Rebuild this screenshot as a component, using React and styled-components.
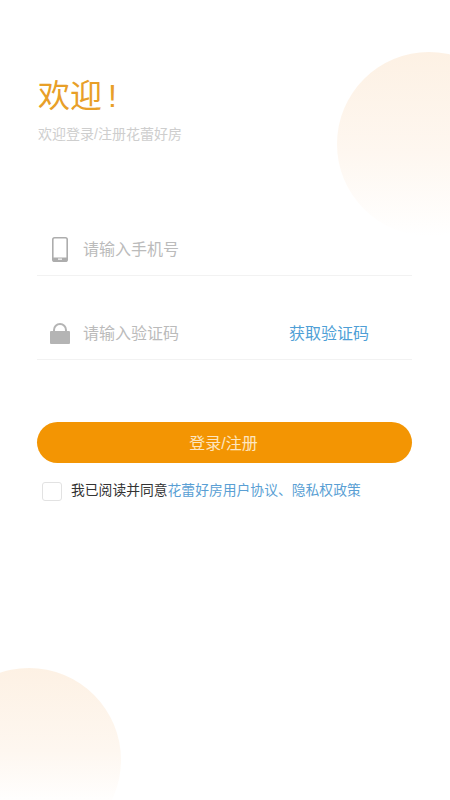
import React from "react";
import styled, { createGlobalStyle } from "styled-components";

const GlobalStyle = createGlobalStyle`
  html, body {
    margin: 0;
    padding: 0;
    background: #fff;
  }
  * {
    box-sizing: border-box;
  }
`;

const App = () => {
  return (
    <>
      <GlobalStyle />
      <Page>
        <TopCircle />
        <BottomCircle />
        <Content>
          <Title>
            欢迎<Bang>!</Bang>
          </Title>
          <Subtitle>欢迎登录/注册花蕾好房</Subtitle>
          <Form>
            <Field>
              <IconBox>
                <svg width="16" height="25" viewBox="0 0 16 25">
                  <rect x="0.8" y="0.8" width="14.4" height="23.4" rx="1.8" fill="none" stroke="#adadad" strokeWidth="1.6" />
                  <path d="M0.8 20.5h14.4v2a1.8 1.8 0 0 1-1.8 1.8H2.6a1.8 1.8 0 0 1-1.8-1.8z" fill="#adadad" />
                  <rect x="6" y="21.4" width="4" height="1.6" fill="#e8e8e8" />
                </svg>
              </IconBox>
              <Placeholder>请输入手机号</Placeholder>
            </Field>
            <Field>
              <IconBox>
                <svg width="20" height="21" viewBox="0 0 20 21">
                  <path d="M4 9V7a6 6 0 0 1 12 0v2" fill="none" stroke="#b4b4b4" strokeWidth="2" />
                  <rect x="0" y="8" width="20" height="13" rx="1" fill="#b4b4b4" />
                </svg>
              </IconBox>
              <Placeholder>请输入验证码</Placeholder>
              <CodeLink>获取验证码</CodeLink>
            </Field>
          </Form>
          <SubmitButton>登录/注册</SubmitButton>
          <Agreement>
            <CheckBox />
            <AgreementText>
              我已阅读并同意<AgreementLink>花蕾好房用户协议、隐私权政策</AgreementLink>
            </AgreementText>
          </Agreement>
        </Content>
      </Page>
    </>
  );
};

//styled components
const FONT = `"Liberation Sans", "Noto Sans CJK SC", sans-serif`;

const Page = styled.div`
  position: relative;
  width: 450px;
  height: 800px;
  overflow: hidden;
  background: #fff;
  font-family: ${FONT};
`;
const TopCircle = styled.div`
  position: absolute;
  left: 337px;
  top: 52px;
  width: 184px;
  height: 184px;
  border-radius: 50%;
  background: linear-gradient(180deg, #fdf1e4 0%, #fef7f0 55%, #ffffff 100%);
`;
const BottomCircle = styled.div`
  position: absolute;
  left: -63px;
  top: 668px;
  width: 184px;
  height: 184px;
  border-radius: 50%;
  background: linear-gradient(180deg, #fdf1e4 0%, #fef7f0 45%, #ffffff 75%);
`;
const Content = styled.div`
  position: relative;
  display: flex;
  flex-direction: column;
  padding: 75px 38px 0 37px;
`;
const Title = styled.h1`
  margin: 0 0 0 1px;
  font-size: 32px;
  line-height: 42px;
  font-weight: 400;
  color: #e89f28;
`;
const Bang = styled.span`
  margin-left: 6px;
`;
const Subtitle = styled.p`
  margin: 8px 0 0 1px;
  font-size: 14px;
  line-height: 18px;
  color: #cecece;
`;
const Form = styled.div`
  display: flex;
  flex-direction: column;
  margin-top: 49px;
`;
const Field = styled.div`
  display: flex;
  align-items: center;
  height: 84px;
  padding-top: 32px;
  border-bottom: 1px solid #f2f2f2;
`;
const IconBox = styled.div`
  display: flex;
  justify-content: center;
  align-items: center;
  width: 46px;
`;
const Placeholder = styled.span`
  flex: 1;
  font-size: 16px;
  line-height: 22px;
  color: #bbb;
`;
const CodeLink = styled.span`
  margin-right: 43px;
  font-size: 16px;
  line-height: 22px;
  color: #4f9fd6;
`;
const SubmitButton = styled.button`
  display: block;
  width: 375px;
  height: 41px;
  margin-top: 62px;
  padding: 0 2px 2px 0;
  border: none;
  border-radius: 21px;
  background: #f39503;
  color: #fde6c0;
  font-family: ${FONT};
  font-size: 16px;
`;
const Agreement = styled.div`
  display: flex;
  align-items: center;
  margin-top: 19px;
  padding-left: 5px;
`;
const CheckBox = styled.span`
  flex: none;
  width: 20px;
  height: 19px;
  border: 1.5px solid #e2e2e2;
  border-radius: 3px;
  background: #fff;
`;
const AgreementText = styled.span`
  margin-left: 9px;
  font-size: 13.8px;
  line-height: 18px;
  color: #333;
  white-space: nowrap;
  transform: translateY(-1px);
`;
const AgreementLink = styled.span`
  color: #5a9fd4;
`;

export default App;
